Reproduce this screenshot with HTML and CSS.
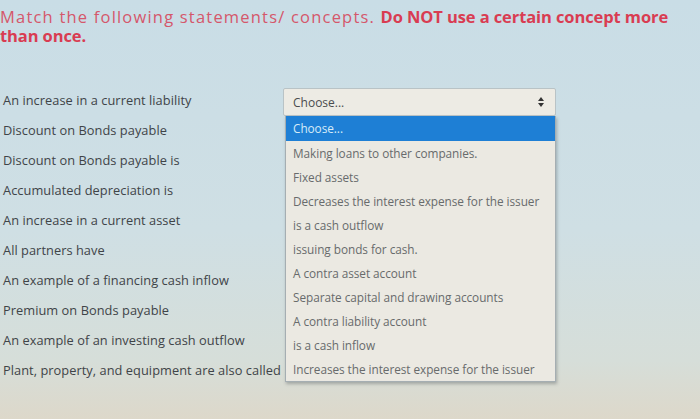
FILE: index.html
```html
<!DOCTYPE html>
<html lang="en">
<head>
<meta charset="utf-8">
<title>Match the following statements</title>
<link rel="stylesheet" href="styles.css">
</head>
<body>
<div class="page">
  <p class="prompt"><span class="prompt-light">Match the following statements/ concepts. </span><strong class="prompt-strong">Do NOT use a certain concept more than once.</strong></p>

  <div class="match">
    <ul class="labels">
      <li>An increase in a current liability</li>
      <li>Discount on Bonds payable</li>
      <li>Discount on Bonds payable is</li>
      <li>Accumulated depreciation is</li>
      <li>An increase in a current asset</li>
      <li>All partners have</li>
      <li>An example of a financing cash inflow</li>
      <li>Premium on Bonds payable</li>
      <li>An example of an investing cash outflow</li>
      <li>Plant, property, and equipment are also called</li>
    </ul>

    <div class="picker">
      <div class="select">
        <span>Choose...</span>
        <svg class="updown" width="8" height="12" viewBox="0 0 8 12">
          <path d="M4 1 L7 5 H1 Z M4 11 L7 7 H1 Z" fill="#333"/>
        </svg>
      </div>
      <ul class="menu">
        <li class="active">Choose...</li>
        <li>Making loans to other companies.</li>
        <li>Fixed assets</li>
        <li>Decreases the interest expense for the issuer</li>
        <li>is a cash outflow</li>
        <li>issuing bonds for cash.</li>
        <li>A contra asset account</li>
        <li>Separate capital and drawing accounts</li>
        <li>A contra liability account</li>
        <li>is a cash inflow</li>
        <li>Increases the interest expense for the issuer</li>
      </ul>
    </div>
  </div>
</div>
</body>
</html>
```

FILE: styles.css
```css
html, body {
  margin: 0;
  padding: 0;
}

body {
  width: 700px;
  height: 419px;
  overflow: hidden;
  font-family: "Open Sans", "Liberation Sans", sans-serif;
  background: linear-gradient(180deg, #c9dde6 0%, #cfdfe4 55%, #d6ded9 86%, #ddd8ca 100%);
}

.page {
  padding: 7px 0 0 0;
}

.prompt {
  margin: 0;
  width: 680px;
  font-size: 16.5px;
  line-height: 19px;
  color: #d44e64;
}

.prompt-light {
  font-weight: 400;
  color: #d5576b;
  letter-spacing: 1.2px;
}

.prompt-strong {
  font-weight: 700;
  color: #d93c52;
  letter-spacing: -0.1px;
}

.match {
  display: grid;
  grid-template-columns: 283px 273px;
  margin-top: 43px;
}

.labels {
  list-style: none;
  margin: -3px 0 0 0;
  padding: 0 0 0 3px;
}

.labels li {
  height: 30px;
  line-height: 30px;
  font-size: 12.8px;
  color: #3f4448;
  white-space: nowrap;
  letter-spacing: 0.05px;
}

.picker {
  display: flex;
  flex-direction: column;
}

.select {
  height: 26px;
  display: flex;
  align-items: center;
  justify-content: space-between;
  padding: 0 10px 0 9px;
  background: #edebe4;
  border: 1px solid #b9c3c6;
  border-radius: 2px;
  font-size: 12px;
  color: #4a4d4f;
}

.updown {
  display: block;
}

.menu {
  list-style: none;
  margin: 0 0 0 2px;
  padding: 0;
  background: #ebe9e2;
  border: 1px solid #a5aeb2;
  border-top: none;
  box-shadow: 1px 2px 3px rgba(60, 70, 75, 0.35);
}

.menu li {
  height: 24px;
  line-height: 24px;
  padding-left: 7px;
  font-size: 11.8px;
  color: #686b6c;
  white-space: nowrap;
  letter-spacing: -0.05px;
}

.menu li.active {
  background: #1e7fd5;
  color: #d6ebf8;
  height: 25px;
  line-height: 25px;
}
```
